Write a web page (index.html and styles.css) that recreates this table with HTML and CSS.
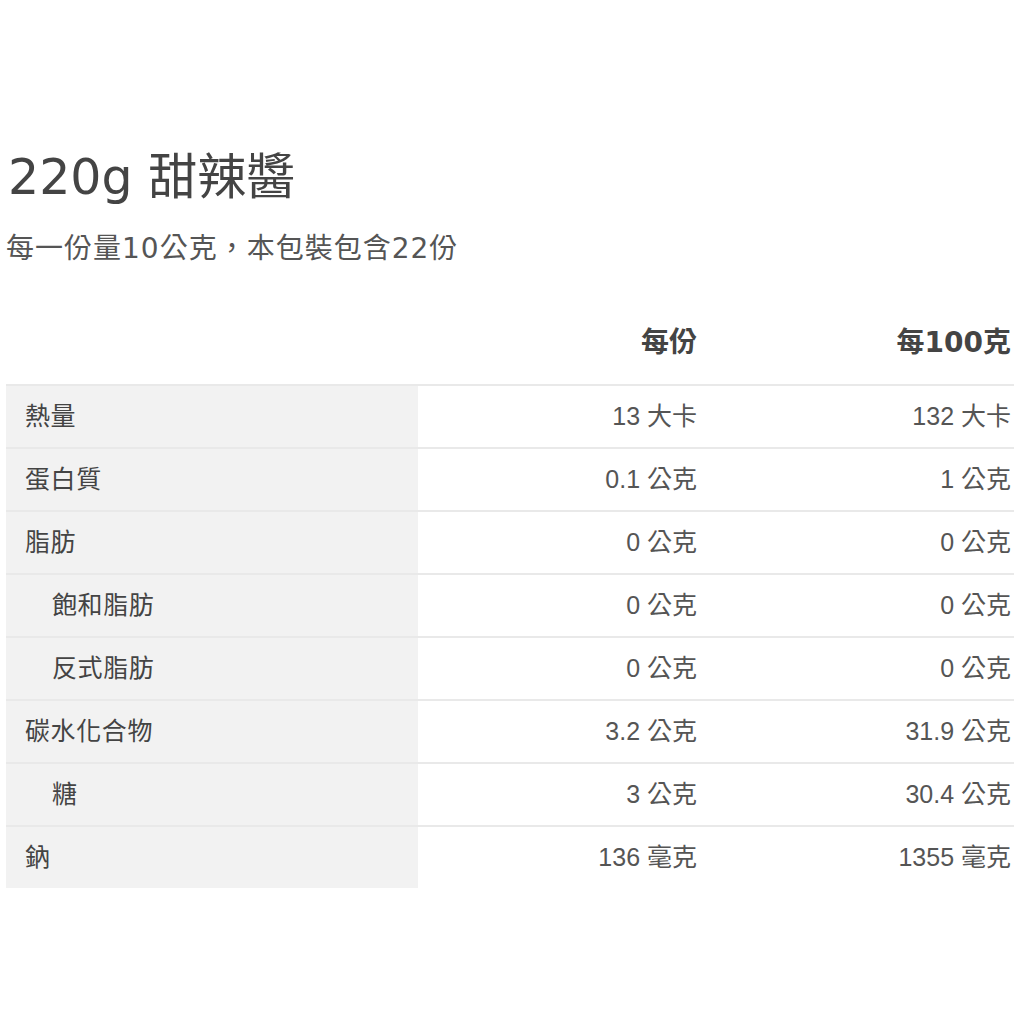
FILE: index.html
```html
<!DOCTYPE html>
<html lang="zh-Hant">
<head>
<meta charset="utf-8">
<link rel="stylesheet" href="styles.css">
</head>
<body>
<div class="page">
  <h1 class="title">220g 甜辣醬</h1>
  <p class="serving">每一份量10公克，本包裝包含22份</p>
  <div class="table">
    <div class="row head">
      <div class="cell label"></div>
      <div class="cell val">每份</div>
      <div class="cell val">每100克</div>
    </div>
    <div class="row">
      <div class="cell label">熱量</div>
      <div class="cell val">13 大卡</div>
      <div class="cell val">132 大卡</div>
    </div>
    <div class="row">
      <div class="cell label">蛋白質</div>
      <div class="cell val">0.1 公克</div>
      <div class="cell val">1 公克</div>
    </div>
    <div class="row">
      <div class="cell label">脂肪</div>
      <div class="cell val">0 公克</div>
      <div class="cell val">0 公克</div>
    </div>
    <div class="row">
      <div class="cell label sub">飽和脂肪</div>
      <div class="cell val">0 公克</div>
      <div class="cell val">0 公克</div>
    </div>
    <div class="row">
      <div class="cell label sub">反式脂肪</div>
      <div class="cell val">0 公克</div>
      <div class="cell val">0 公克</div>
    </div>
    <div class="row">
      <div class="cell label">碳水化合物</div>
      <div class="cell val">3.2 公克</div>
      <div class="cell val">31.9 公克</div>
    </div>
    <div class="row">
      <div class="cell label sub">糖</div>
      <div class="cell val">3 公克</div>
      <div class="cell val">30.4 公克</div>
    </div>
    <div class="row">
      <div class="cell label">鈉</div>
      <div class="cell val">136 毫克</div>
      <div class="cell val">1355 毫克</div>
    </div>
  </div>
</div>
</body>
</html>
```

FILE: styles.css
```css
html, body {
  margin: 0;
  padding: 0;
  background: #ffffff;
}
.page {
  padding: 150px 10px 0 6px;
  font-family: "Liberation Sans", "Noto Sans CJK TC", sans-serif;
  color: #555555;
}
.title {
  margin: 0;
  padding-left: 2px;
  font-family: "DejaVu Sans", "Noto Sans CJK TC", sans-serif;
  font-weight: 400;
  font-size: 49px;
  line-height: 56px;
  color: #444444;
}
.serving {
  margin: 25px 0 0 0;
  font-family: "DejaVu Sans", "Noto Sans CJK TC", sans-serif;
  font-size: 28px;
  line-height: 36px;
  letter-spacing: 1px;
  color: #555555;
}
.table {
  margin-top: 35px;
  display: flex;
  flex-direction: column;
}
.row {
  display: grid;
  grid-template-columns: 412px 282px 314px;
  border-top: 2px solid #e9e9e9;
}
.row.head {
  border-top: none;
}
.cell {
  height: 61px;
  line-height: 61px;
  font-size: 25px;
}
.head .cell {
  height: 82px;
  line-height: 82px;
  font-family: "DejaVu Sans", "Noto Sans CJK TC", sans-serif;
  font-weight: 700;
  font-size: 28px;
  color: #444444;
}
.head .label {
  background: transparent;
}
.label {
  background: #f2f2f2;
  padding-left: 19px;
  letter-spacing: 0.6px;
  color: #444444;
}
.label.sub {
  padding-left: 46px;
}
.val {
  text-align: right;
  padding-right: 3px;
}
```
